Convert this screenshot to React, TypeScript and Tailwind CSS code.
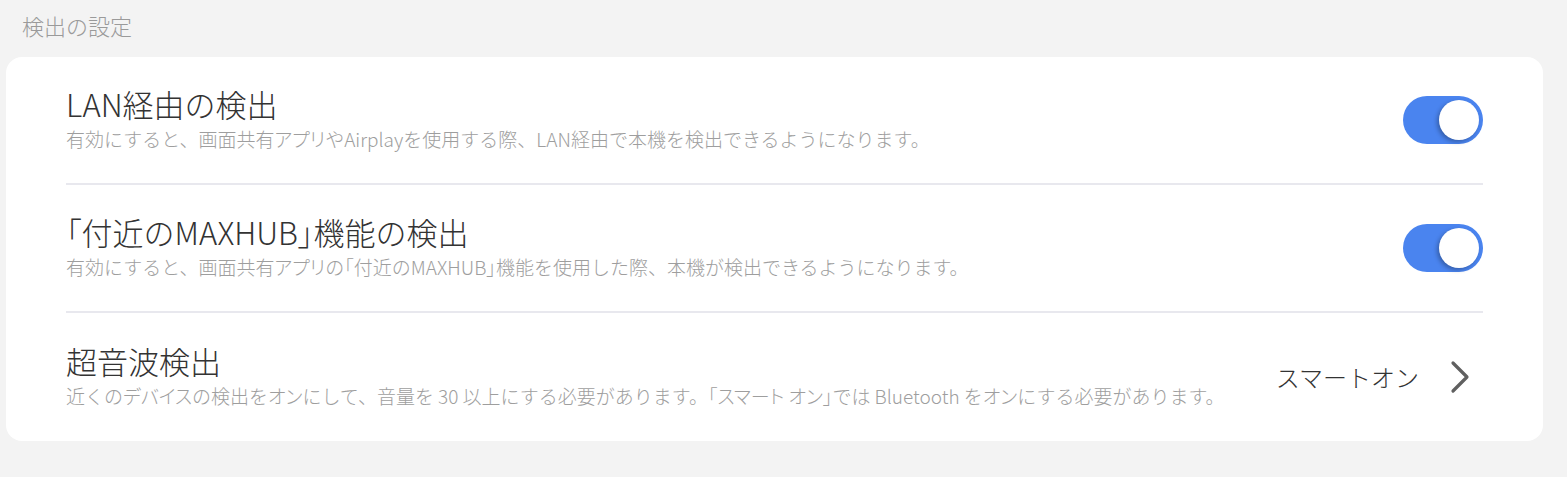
import { useState } from "react";

// brackets and katakana runs are set proportionally, as in the reference font
function Jp({ text }: { text: string }) {
  const parts = text.split(/([「」]|[\u30A0-\u30FF]+)/);
  return (
    <>
      {parts.map((p, i) =>
        /^([「」]|[\u30A0-\u30FF]+)$/.test(p) ? (
          <span key={i} className="[font-feature-settings:'palt']">
            {p}
          </span>
        ) : (
          p
        )
      )}
    </>
  );
}

function Toggle({ on, onChange }: { on: boolean; onChange: () => void }) {
  return (
    <button
      onClick={onChange}
      className={`flex h-12 w-20 shrink-0 items-center rounded-full px-1 ${
        on ? "justify-end bg-[#4a84ef]" : "justify-start bg-[#d4d4d4]"
      }`}
    >
      <span className="h-10 w-10 rounded-full bg-white shadow-[-2px_2px_4px_rgba(0,0,0,0.28)]" />
    </button>
  );
}

function Row({
  title,
  desc,
  last,
  children,
}: {
  title: string;
  desc: string;
  last?: boolean;
  children: React.ReactNode;
}) {
  return (
    <div
      className={`flex h-[128px] items-center justify-between ${
        last ? "" : "border-b-2 border-[#e8e8ee]"
      }`}
    >
      <div className="flex flex-col">
        <div className="text-[31px] font-light leading-[37px] text-[#333333]">
          <Jp text={title} />
        </div>
        <div className="text-[19px] font-light leading-[34px] text-[#9e9e9e]">
          <Jp text={desc} />
        </div>
      </div>
      {children}
    </div>
  );
}

export default function App() {
  const [lan, setLan] = useState(true);
  const [nearby, setNearby] = useState(true);

  return (
    <div className="h-[477px] w-full bg-[#f3f3f3] pl-[6px] pr-[24px] font-['Noto_Sans_CJK_JP','Noto_Sans',sans-serif]">
      <div className="pl-4 pt-[9px] text-[22px] font-light leading-[32px] text-[#9a9a9a]">
        検出の設定
      </div>
      <div className="mt-[16px] rounded-[16px] bg-white px-[60px]">
        <Row
          title="LAN経由の検出"
          desc="有効にすると、画面共有アプリやAirplayを使用する際、LAN経由で本機を検出できるようになります。"
        >
          <Toggle on={lan} onChange={() => setLan(!lan)} />
        </Row>
        <Row
          title="「付近のMAXHUB」機能の検出"
          desc="有効にすると、画面共有アプリの「付近のMAXHUB」機能を使用した際、本機が検出できるようになります。"
        >
          <Toggle on={nearby} onChange={() => setNearby(!nearby)} />
        </Row>
        <Row
          last
          title="超音波検出"
          desc="近くのデバイスの検出をオンにして、音量を 30 以上にする必要があります。「スマート オン」では Bluetooth をオンにする必要があります。"
        >
          <button className="flex items-center gap-[30px] pr-[12px]">
            <span className="text-[24px] font-light text-[#333333]">スマートオン</span>
            <svg width="22" height="34" viewBox="0 0 22 34" fill="none">
              <path
                d="M4 3L18 17L4 31"
                stroke="#606060"
                strokeWidth="3.2"
                strokeLinecap="round"
                strokeLinejoin="round"
              />
            </svg>
          </button>
        </Row>
      </div>
    </div>
  );
}
